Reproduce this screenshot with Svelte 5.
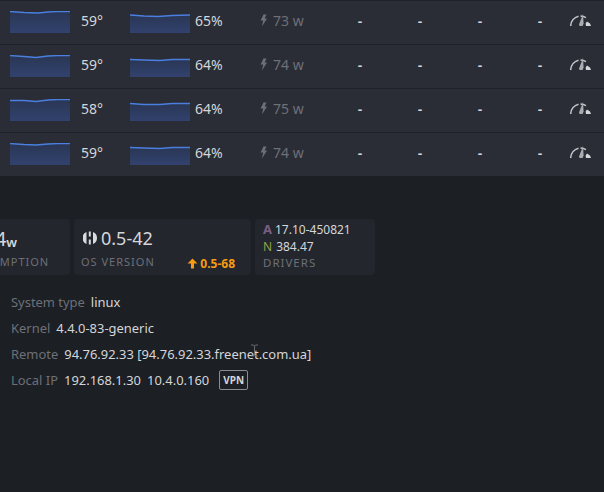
<script>
  const rows = [
    { temp: 59, fan: 65, power: 73, t: '0,11.5 14,12.5 28,13 38,12 46,11.5 60,11.5', f: '0,1 14,2 28,2.5 42,1.5 60,1' },
    { temp: 59, fan: 64, power: 74, t: '0,11.5 14,12.5 26,13.5 38,12 48,11.5 60,11.5', f: '0,1.5 14,2 30,2.5 42,1.5 60,1.5' },
    { temp: 58, fan: 64, power: 75, t: '0,12.5 14,12.5 26,13.5 38,12 48,11.5 60,11.5', f: '0,1.5 14,2.5 30,2.5 42,1.5 60,1.5' },
    { temp: 59, fan: 64, power: 74, t: '0,11.5 14,12.5 26,13 38,12 48,11.5 60,11.5', f: '0,1.5 14,2 30,2.5 42,1.5 60,1.5' }
  ];

  const info = [
    ['System type', 'linux'],
    ['Kernel', '4.4.0-83-generic'],
    ['Remote', '94.76.92.33 [94.76.92.33.freenet.com.ua]']
  ];
</script>

<div class="page">
  <svg class="defs" width="0" height="0">
    <defs>
      <linearGradient id="sparkfill" x1="0" y1="0" x2="0" y2="1">
        <stop offset="0" stop-color="#2a3654" />
        <stop offset="1" stop-color="#31426e" />
      </linearGradient>
    </defs>
  </svg>

  <div class="table">
    {#each rows as row}
      <div class="row">
        <svg class="spark temp-spark" width="60" height="22" viewBox="0 11 60 22">
          <polygon points="{row.t} 60,33 0,33" fill="url(#sparkfill)" />
          <polyline points={row.t} fill="none" stroke="#4a7fe0" stroke-width="1.3" />
        </svg>
        <span class="temp">{row.temp}°</span>
        <svg class="spark fan" width="60" height="19" viewBox="0 0 60 19">
          <polygon points="{row.f} 60,19 0,19" fill="url(#sparkfill)" />
          <polyline points={row.f} fill="none" stroke="#4a7fe0" stroke-width="1.3" />
        </svg>
        <span class="pct">{row.fan}%</span>
        <span class="power">
          <svg width="7" height="13" viewBox="0 0 7 13">
            <path d="M3.5 0.5h3L4.6 4.6H7L2 12.5l1.2-6H0.6z" fill="#6d7077" />
          </svg>
          {row.power} w
        </span>
        <span class="dash">-</span>
        <span class="dash">-</span>
        <span class="dash">-</span>
        <span class="dash">-</span>
        <svg class="gauge" width="22" height="14" viewBox="0 0 22 14">
          <path d="M0.7 13A10.5 10.5 0 0 1 8.5 3.2" fill="none" stroke="#c4c6ca" stroke-width="1.5" />
          <path d="M10.5 3A10.5 10.5 0 0 1 16 4.6" fill="none" stroke="#c4c6ca" stroke-width="1.3" />
          <path d="M13 1l0.6 9.5-1 2.5h-3l-0.6-1.5z" fill="#a9abb0" />
          <path d="M17 8.5l3 2 1 2.5h-5l-0.4-2.5z" fill="#d4d5d8" />
        </svg>
      </div>
    {/each}
  </div>

  <div class="cards">
    <div class="card consumption">
      <div class="value"><span class="big wide">294</span><span class="unit">w</span></div>
      <div class="label">CONSUMPTION</div>
    </div>
    <div class="card os">
      <div class="value">
        <svg width="14" height="14" viewBox="0 0 14 14">
          <path d="M3.5 1A6.5 6.5 0 0 0 3.5 13z" fill="#d8dadd" />
          <path d="M10 1A6.5 6.5 0 0 1 10 13z" fill="#d8dadd" />
          <rect x="5.8" y="0.5" width="2" height="5" fill="#d8dadd" />
          <rect x="5.8" y="8.5" width="2" height="5" fill="#d8dadd" />
        </svg>
        <span class="big">0.5-42</span>
      </div>
      <div class="os-foot">
        <span class="label">OS VERSION</span>
        <span class="update">
          <svg width="11" height="11" viewBox="0 0 11 11">
            <path d="M5.5 0.5L10.5 5.5H7V10.5H4V5.5H0.5z" fill="#f59b14" />
          </svg>
          0.5-68
        </span>
      </div>
    </div>
    <div class="card drivers">
      <div class="driver"><span class="amd">A</span>17.10-450821</div>
      <div class="driver"><span class="nv">N</span>384.47</div>
      <div class="label">DRIVERS</div>
    </div>
  </div>

  <div class="info">
    {#each info as [name, value]}
      <div class="line"><span class="key">{name}</span><span class="val">{value}</span></div>
    {/each}
    <div class="line">
      <span class="key">Local IP</span>
      <span class="val">192.168.1.30</span>
      <span class="val">10.4.0.160</span>
      <span class="vpn">VPN</span>
    </div>
    <svg class="cursor" width="9" height="13" viewBox="0 0 9 13">
      <path d="M1 1h2.5L4.5 2l1-1H8M4.5 2v9M1 12h2.5l1-1 1 1H8" fill="none" stroke="#6a6c70" stroke-width="1" />
    </svg>
  </div>
</div>

<style>
  :global(body) {
    margin: 0;
    background: #1c1f24;
  }

  .page {
    width: 604px;
    height: 492px;
    overflow: hidden;
    background: #1c1f24;
    font-family: "Noto Sans", "Open Sans", sans-serif;
    color: #dcdee1;
  }

  .defs {
    display: block;
    height: 0;
  }

  .table {
    height: 176px;
  }

  .row {
    display: grid;
    grid-template-columns: 71px 49px 65px 65px 70px 60px 60px 60px 60px 34px;
    align-items: center;
    height: 38px;
    padding: 0 0 5px 10px;
    background: #2a2d35;
    border-top: 1px solid #1f2127;
    font-size: 14px;
  }

  .spark {
    display: block;
    align-self: start;
  }

  .temp-spark {
    margin-top: 10px;
  }

  .fan {
    margin-top: 13px;
  }

  .temp,
  .pct {
    color: #d4d6da;
  }

  .power {
    color: #6d7077;
    display: flex;
    align-items: center;
    gap: 6px;
  }

  .dash {
    text-align: center;
    color: #d4d6da;
    font-weight: 600;
  }

  .gauge {
    display: block;
  }

  .cards {
    display: flex;
    gap: 4px;
    margin: 43px 0 0 -52px;
    height: 56px;
  }

  .card {
    background: #23262d;
    border-radius: 4px;
    box-sizing: border-box;
  }

  .consumption {
    width: 122px;
    padding: 6px 0 0 9px;
  }

  .consumption .value {
    padding-left: 14px;
    gap: 0;
  }

  .os {
    width: 177px;
    padding: 6px 16px 0 7px;
  }

  .os .value {
    margin-left: 2px;
    gap: 4px;
  }

  .drivers {
    width: 120px;
    padding: 2px 8px 0 8px;
  }

  .value {
    display: flex;
    align-items: center;
    height: 26px;
    margin-left: 1px;
  }

  .big {
    font-size: 18px;
    color: #d4d6da;
  }

  .wide {
    font-size: 20px;
  }

  .unit {
    font-size: 13px;
    font-weight: 600;
    align-self: flex-end;
    color: #d4d6da;
  }

  .label {
    font-size: 11px;
    letter-spacing: 1px;
    color: #6d7077;
    margin-top: 3px;
  }

  .os-foot {
    display: flex;
    justify-content: space-between;
    align-items: flex-start;
  }

  .update {
    font-size: 12px;
    font-weight: 700;
    color: #f59b14;
    display: flex;
    align-items: center;
    gap: 2px;
    margin-top: 4px;
  }

  .driver {
    font-size: 12px;
    line-height: 17px;
    color: #d4d6da;
    display: flex;
    gap: 4px;
  }

  .drivers .label {
    margin-top: 0;
    font-size: 11.5px;
  }

  .amd {
    color: #7a5f82;
    font-weight: 700;
    font-size: 13px;
    margin-right: -1px;
  }

  .nv {
    color: #8fa04a;
  }

  .info {
    position: relative;
    margin-top: 14px;
    padding-left: 11px;
    font-size: 12.95px;
  }

  .line {
    display: flex;
    align-items: center;
    height: 26px;
    gap: 6px;
  }

  .key {
    color: #6d7077;
  }

  .val {
    color: #d4d6da;
  }

  .vpn {
    font-size: 10px;
    font-weight: 700;
    color: #d4d6da;
    border: 1px solid #8a8c90;
    border-radius: 2px;
    padding: 2px 3px;
    margin-left: 4px;
  }

  .cursor {
    position: absolute;
    left: 250px;
    top: 55px;
  }
</style>
